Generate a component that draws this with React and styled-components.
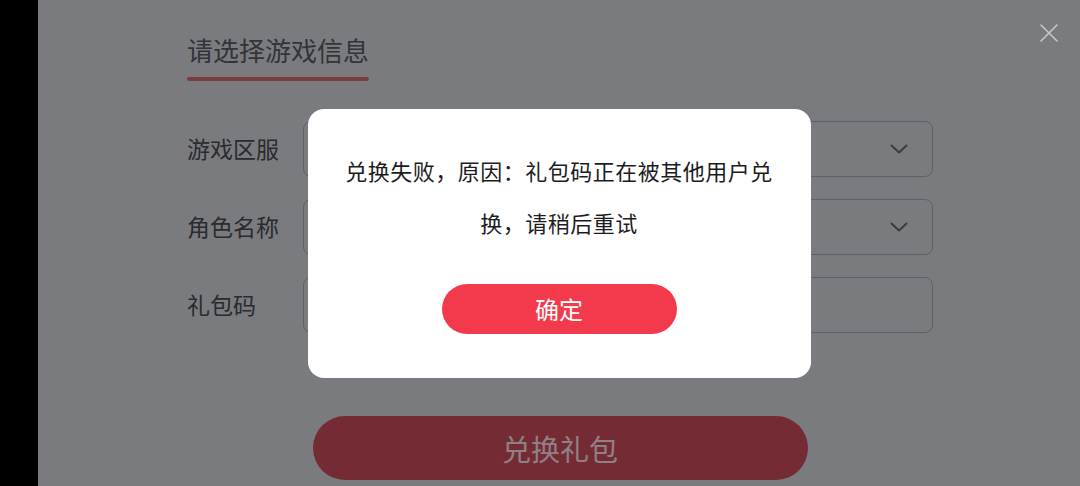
import styled, { createGlobalStyle } from "styled-components";

const GlobalStyle = createGlobalStyle`
  html, body {
    margin: 0;
    padding: 0;
    width: 100%;
    height: 100%;
    overflow: hidden;
  }
  body {
    font-family: "Noto Sans CJK SC", "Noto Sans", sans-serif;
  }
  * {
    box-sizing: border-box;
  }
`;

const Screen = styled.div`
  width: 1080px;
  height: 486px;
  display: flex;
  background-color: #000;
`;

const SideStrip = styled.div`
  width: 38px;
  flex-shrink: 0;
  background-color: #000;
`;

const Main = styled.div`
  position: relative;
  flex: 1;
  background-color: #cbcdd4;
  overflow: hidden;
`;

const Content = styled.div`
  width: 746px;
  margin-left: 149px;
  padding-top: 31px;
  display: flex;
  flex-direction: column;
`;

const Title = styled.h2`
  align-self: flex-start;
  margin: 0;
  font-size: 26px;
  font-weight: 400;
  line-height: 38px;
  color: #55575e;
  padding-bottom: 12px;
  position: relative;

  &::after {
    content: "";
    position: absolute;
    left: 0;
    right: 0;
    bottom: 0;
    height: 4px;
    border-radius: 2px;
    background-color: #cd646d;
  }
`;

const Form = styled.div`
  margin-top: 40px;
  display: flex;
  flex-direction: column;
  gap: 22px;
`;

const Row = styled.div`
  display: flex;
  align-items: center;
`;

const Label = styled.span`
  width: 116px;
  flex-shrink: 0;
  font-size: 23px;
  color: #46484d;
  margin-top: -2px;
`;

const Field = styled.div`
  flex: 1;
  height: 56px;
  border: 1.5px solid #9ea2aa;
  border-radius: 8px;
  display: flex;
  align-items: center;
  justify-content: flex-end;
  padding-right: 24px;
`;

const SubmitButton = styled.button`
  align-self: center;
  margin-top: 83px;
  width: 495px;
  height: 64px;
  border: none;
  border-radius: 32px;
  background-color: #c34858;
  color: #edd5dc;
  font-family: inherit;
  font-size: 29px;
`;

const CloseButton = styled.button`
  position: absolute;
  top: 22px;
  right: 20px;
  z-index: 2;
  width: 22px;
  height: 22px;
  padding: 0;
  border: none;
  background: none;
  display: flex;
  align-items: center;
  justify-content: center;
`;

const Overlay = styled.div`
  position: absolute;
  inset: 0;
  z-index: 1;
  background-color: rgba(0, 0, 0, 0.4);
  display: flex;
  align-items: center;
  justify-content: center;
`;

const Dialog = styled.div`
  width: 503px;
  height: 269px;
  border-radius: 16px;
  background-color: #fff;
  padding: 35px 36px 0;
  display: flex;
  flex-direction: column;
  align-items: center;
`;

const Message = styled.p`
  margin: 0;
  font-size: 22px;
  line-height: 52px;
  letter-spacing: 0.5px;
  text-align: center;
  color: #1c1c1e;
`;

const ConfirmButton = styled.button`
  margin-top: 36px;
  width: 235px;
  height: 50px;
  border: none;
  border-radius: 25px;
  background-color: #f23a4c;
  color: #fff;
  font-family: inherit;
  font-size: 24px;
`;

function Chevron() {
  return (
    <svg width="18" height="10" viewBox="0 0 18 10" fill="none">
      <path
        d="M1.5 1.5 L9 8.5 L16.5 1.5"
        stroke="#62646b"
        strokeWidth="2"
        strokeLinecap="round"
        strokeLinejoin="round"
      />
    </svg>
  );
}

const fields = [
  { label: "游戏区服", select: true },
  { label: "角色名称", select: true },
  { label: "礼包码", select: false },
];

export default function App() {
  return (
    <>
      <GlobalStyle />
      <Screen>
        <SideStrip />
        <Main>
          <Content>
            <Title>请选择游戏信息</Title>
            <Form>
              {fields.map((f) => (
                <Row key={f.label}>
                  <Label>{f.label}</Label>
                  <Field>{f.select && <Chevron />}</Field>
                </Row>
              ))}
            </Form>
            <SubmitButton>兑换礼包</SubmitButton>
          </Content>
          <CloseButton aria-label="关闭">
            <svg width="20" height="20" viewBox="0 0 20 20">
              <path
                d="M2 2 L18 18 M18 2 L2 18"
                stroke="#c6c7ca"
                strokeWidth="1.6"
                strokeLinecap="round"
              />
            </svg>
          </CloseButton>
          <Overlay>
            <Dialog>
              <Message>兑换失败，原因：礼包码正在被其他用户兑换，请稍后重试</Message>
              <ConfirmButton>确定</ConfirmButton>
            </Dialog>
          </Overlay>
        </Main>
      </Screen>
    </>
  );
}
